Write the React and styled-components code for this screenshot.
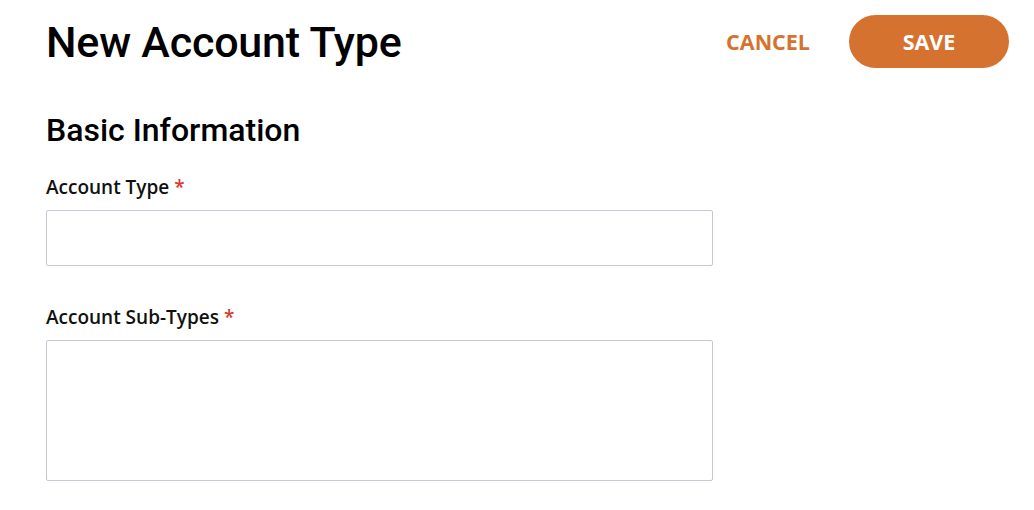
import React from 'react'
import styled, { createGlobalStyle } from 'styled-components'

const GlobalStyle = createGlobalStyle`
  body {
    margin: 0;
    background: #fff;
    font-family: "Open Sans", sans-serif;
  }
`

const Page = styled.div`
  padding: 15px 25px 0 46px;
`

const Header = styled.div`
  display: flex;
  align-items: center;
  justify-content: space-between;
  height: 53px;
`

const Title = styled.h1`
  margin: 0;
  font-family: Roboto, sans-serif;
  font-weight: 500;
  font-size: 43px;
  color: #000;
  letter-spacing: -0.2px;
`

const Actions = styled.div`
  display: flex;
  align-items: center;
  gap: 39px;
`

const TextButton = styled.button`
  border: none;
  background: none;
  padding: 0;
  font-family: "Open Sans", sans-serif;
  font-weight: 700;
  font-size: 21.5px;
  color: #d5722f;
  cursor: pointer;
`

const PrimaryButton = styled.button`
  border: none;
  width: 160px;
  height: 53px;
  border-radius: 27px;
  background: #d5722f;
  color: #fff;
  font-family: "Open Sans", sans-serif;
  font-weight: 700;
  font-size: 21.5px;
  cursor: pointer;
`

const SectionTitle = styled.h2`
  margin: 43px 0 0;
  font-family: Roboto, sans-serif;
  font-weight: 500;
  font-size: 32px;
  color: #000;
`

const Field = styled.div`
  margin-top: ${p => p.$top}px;
  width: 667px;
`

const Label = styled.label`
  display: block;
  font-weight: 600;
  font-size: 19px;
  color: #111;
  margin-bottom: 10px;
`

const Required = styled.span`
  color: #d63a2f;
  margin-left: 5px;
`

const Input = styled.input`
  box-sizing: border-box;
  width: 100%;
  height: 56px;
  border: 1px solid #c9c8d3;
  border-radius: 2px;
  outline: none;
`

const TextArea = styled.textarea`
  box-sizing: border-box;
  display: block;
  width: 100%;
  height: 141px;
  border: 1px solid #c9c8d3;
  border-radius: 2px;
  resize: none;
  outline: none;
`

export default function App() {
  return (
    <>
      <GlobalStyle />
      <Page>
        <Header>
          <Title>New Account Type</Title>
          <Actions>
            <TextButton>CANCEL</TextButton>
            <PrimaryButton>SAVE</PrimaryButton>
          </Actions>
        </Header>
        <SectionTitle>Basic Information</SectionTitle>
        <Field $top={25}>
          <Label>Account Type<Required>*</Required></Label>
          <Input />
        </Field>
        <Field $top={38}>
          <Label>Account Sub-Types<Required>*</Required></Label>
          <TextArea />
        </Field>
      </Page>
    </>
  )
}
